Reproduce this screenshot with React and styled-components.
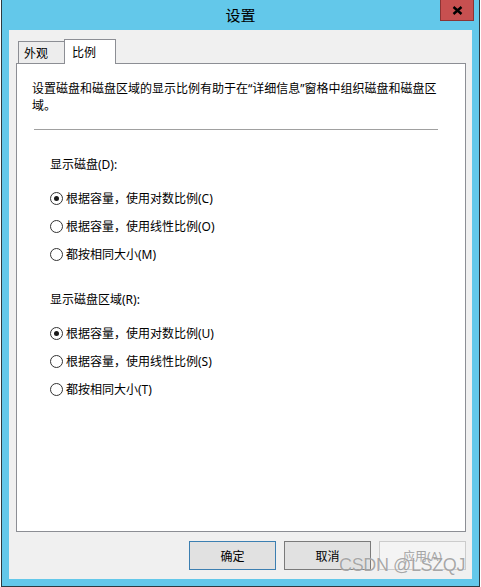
import React from "react";
import styled, { createGlobalStyle } from "styled-components";

const GlobalStyle = createGlobalStyle`
  html, body { margin: 0; padding: 0; background: #ffffff; }
  body {
    font-family: "Noto Sans", "Noto Sans CJK SC", sans-serif;
    font-size: 12px;
    color: #000;
  }
  * { box-sizing: border-box; }
`;

const Window = styled.div`
  position: relative;
  width: 479px;
  height: 587px;
  margin-left: 1px;
  background: #63c8ea;
  border: 1px solid #2e3a40;
  border-top: none;
  padding: 0 7px 7px;
  display: flex;
  flex-direction: column;
`;

const TitleBar = styled.div`
  height: 30px;
  margin: 0 -7px;
  display: grid;
  grid-template-columns: 1fr auto 1fr;
  align-items: center;
`;

const Title = styled.div`
  grid-column: 2;
  font-family: "Noto Sans CJK SC", sans-serif;
  font-size: 15px;
  line-height: 30px;
  color: #000;
`;

const CloseButton = styled.div`
  grid-column: 3;
  justify-self: end;
  align-self: start;
  margin-right: 5px;
  width: 34px;
  height: 21px;
  background: #c75050;
  border: 1px solid #8b3434;
  border-top: none;
  display: flex;
  align-items: center;
  justify-content: center;
`;

const Body = styled.div`
  flex: 1;
  background: #f0f0f0;
  padding: 9px 6px 9px 7px;
  display: flex;
  flex-direction: column;
`;

const TabRow = styled.div`
  height: 24px;
  padding-left: 2px;
  display: flex;
  align-items: flex-end;
`;

const Tab = styled.div`
  position: relative;
  font-family: "Noto Sans CJK SC", sans-serif;
  font-size: 12px;
  border: 1px solid #8c8e94;
  border-bottom: none;
  display: flex;
  align-items: center;
  ${(p) =>
    p.$active
      ? `
    z-index: 1;
    width: 52px;
    height: 25px;
    margin-bottom: -1px;
    padding: 0 0 2px 7px;
    background: #ffffff;
  `
      : `
    width: 46px;
    height: 22px;
    border-right: none;
    padding-left: 5px;
    background: #ededed;
  `}
`;

const Panel = styled.div`
  height: 469px;
  background: #ffffff;
  border: 1px solid #8c8e94;
  padding: 16px 23px 0 15px;
`;

const Description = styled.p`
  margin: 0;
  line-height: 17px;
`;

const Separator = styled.div`
  height: 1px;
  margin: 15px 4px 0 2px;
  background: #a0a0a0;
`;

const Group = styled.div`
  margin-top: ${(p) => p.$top}px;
  margin-left: 18px;
`;

const GroupLabel = styled.div`
  line-height: 17px;
`;

const RadioList = styled.div`
  margin-top: 11px;
  display: flex;
  flex-direction: column;
`;

const RadioRow = styled.label`
  height: 28px;
  display: flex;
  align-items: center;
  gap: 3px;
`;

const RadioCircle = styled.span`
  width: 13px;
  height: 13px;
  border-radius: 50%;
  border: 1px solid #333333;
  background: #ffffff;
  display: flex;
  align-items: center;
  justify-content: center;
  &::after {
    content: "";
    width: 5px;
    height: 5px;
    border-radius: 50%;
    background: ${(p) => (p.$checked ? "#1a1a1a" : "transparent")};
  }
`;

const Footer = styled.div`
  margin-top: 9px;
  display: flex;
  justify-content: flex-end;
  gap: 8px;
`;

const Button = styled.div`
  width: 87px;
  height: 29px;
  display: flex;
  align-items: center;
  justify-content: center;
  font-family: "Noto Sans", "Noto Sans CJK SC", sans-serif;
  font-size: 12px;
  background: ${(p) => (p.$disabled ? "#f4f4f4" : "#e1e1e1")};
  color: ${(p) => (p.$disabled ? "#a3a3a3" : "#000")};
  border: 1px solid
    ${(p) => (p.$primary ? "#3c7fb1" : p.$disabled ? "#cccccc" : "#7a7a7a")};
`;

const Watermark = styled.div`
  position: absolute;
  right: 14px;
  bottom: 10px;
  font-family: "Liberation Sans", Arial, sans-serif;
  font-size: 18px;
  letter-spacing: -0.4px;
  color: rgba(110, 110, 110, 0.6);
  text-shadow: 0 0 1px rgba(255, 255, 255, 0.9);
  pointer-events: none;
`;

const CloseIcon = () => (
  <svg width="11" height="9" viewBox="0 0 11 9">
    <path d="M1.5 1 L9.5 8 M9.5 1 L1.5 8" stroke="#000" strokeWidth="2.4" strokeLinecap="butt" />
  </svg>
);

const groups = [
  {
    label: "显示磁盘(D):",
    top: 26,
    items: [
      { text: "根据容量，使用对数比例(C)", checked: true },
      { text: "根据容量，使用线性比例(O)" },
      { text: "都按相同大小(M)" },
    ],
  },
  {
    label: "显示磁盘区域(R):",
    top: 23,
    items: [
      { text: "根据容量，使用对数比例(U)", checked: true },
      { text: "根据容量，使用线性比例(S)" },
      { text: "都按相同大小(T)" },
    ],
  },
];

export default function App() {
  return (
    <>
      <GlobalStyle />
      <Window>
        <TitleBar>
          <Title>设置</Title>
          <CloseButton>
            <CloseIcon />
          </CloseButton>
        </TitleBar>
        <Body>
          <TabRow>
            <Tab>外观</Tab>
            <Tab $active>比例</Tab>
          </TabRow>
          <Panel>
            <Description>
              设置磁盘和磁盘区域的显示比例有助于在“详细信息”窗格中组织磁盘和磁盘区域。
            </Description>
            <Separator />
            {groups.map((g) => (
              <Group key={g.label} $top={g.top}>
                <GroupLabel>{g.label}</GroupLabel>
                <RadioList>
                  {g.items.map((it) => (
                    <RadioRow key={it.text}>
                      <RadioCircle $checked={it.checked} />
                      <span>{it.text}</span>
                    </RadioRow>
                  ))}
                </RadioList>
              </Group>
            ))}
          </Panel>
          <Footer>
            <Button $primary>确定</Button>
            <Button>取消</Button>
            <Button $disabled>应用(A)</Button>
          </Footer>
        </Body>
        <Watermark>CSDN @LSZQJ</Watermark>
      </Window>
    </>
  );
}
